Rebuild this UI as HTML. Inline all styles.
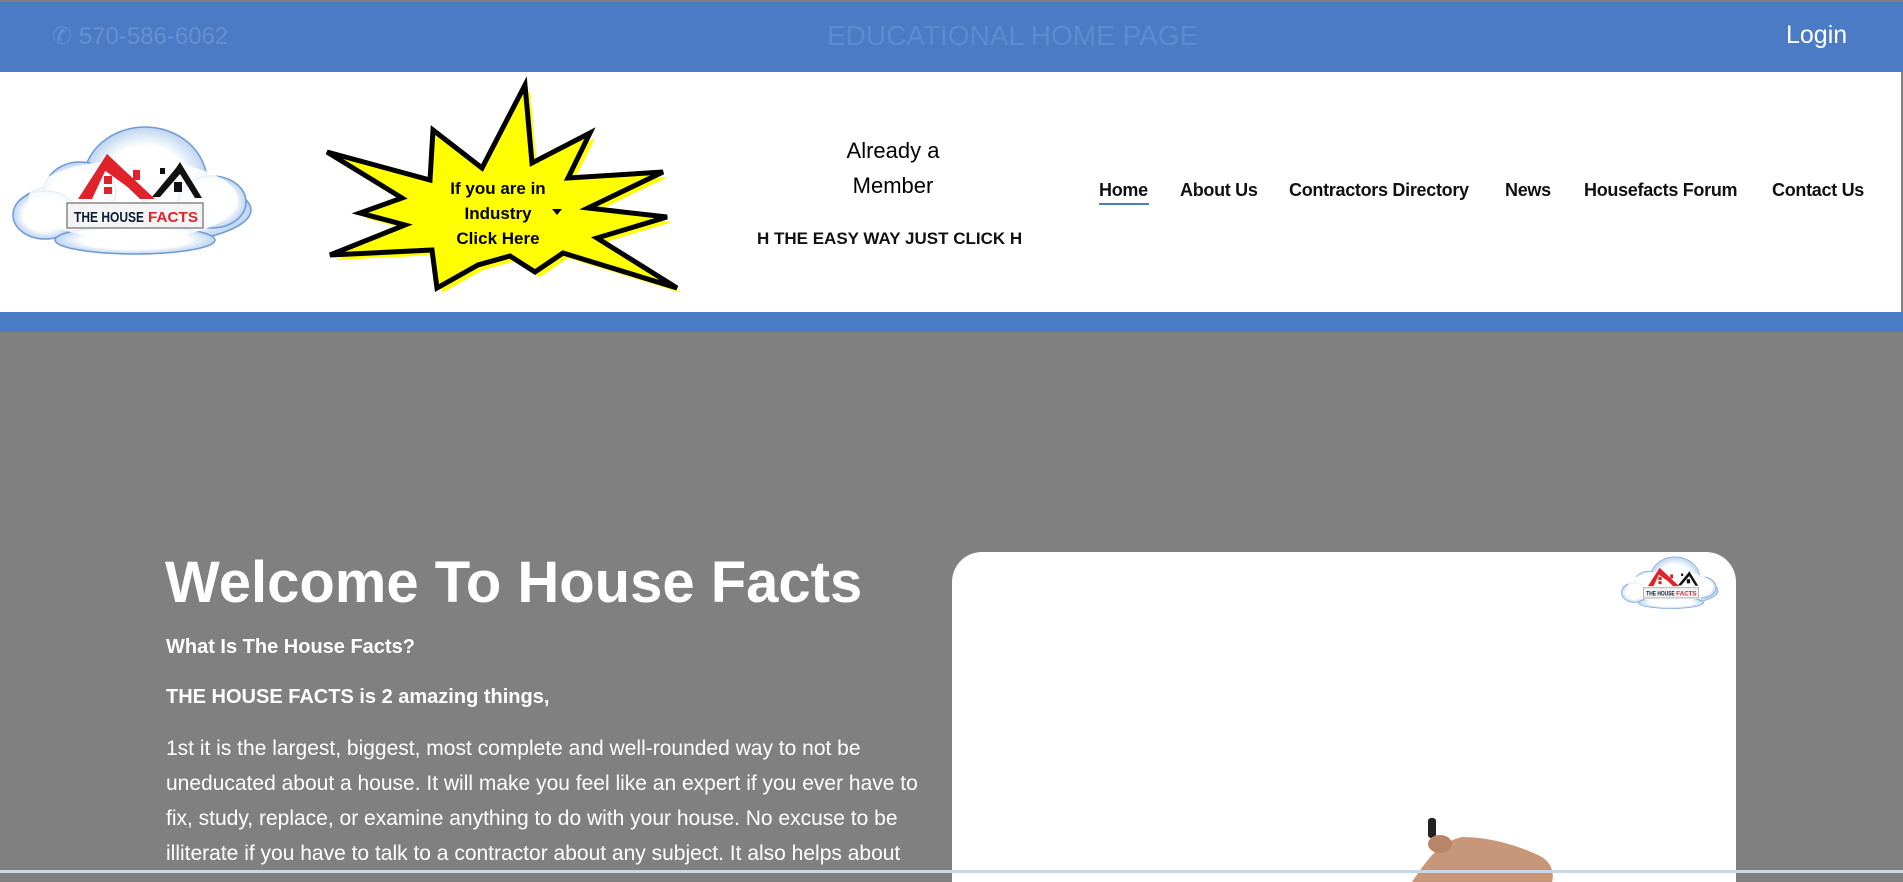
<!DOCTYPE html>
<html><head><meta charset="utf-8"><style>
*{margin:0;padding:0;box-sizing:border-box}
body{width:1903px;height:873px;overflow:hidden;background:#808080;font-family:"Liberation Sans",Arial,sans-serif;position:relative}
.top{position:absolute;left:0;top:2px;width:1903px;height:70px;background:#4b7bc4}
.abs{position:absolute;white-space:nowrap}
.hdr{position:absolute;left:0;top:72px;width:1901px;height:240px;background:#fff}
.strip{position:absolute;left:0;top:312px;width:1903px;height:20px;background:#4b7bc4}
.nav{position:absolute;top:180px;font-size:18px;font-weight:bold;color:#111;letter-spacing:-0.3px}
.w{color:#fff;font-weight:bold}
.p{position:absolute;left:166px;color:#fff;font-size:21px;line-height:35px;white-space:nowrap}
</style></head><body>
<svg width="0" height="0" style="position:absolute"><defs>
<radialGradient id="cg" cx="50%" cy="50%" r="60%"><stop offset="0.55" stop-color="#fff"/><stop offset="0.85" stop-color="#b9d2ef"/><stop offset="1" stop-color="#5c8fd0"/></radialGradient>
<g id="logo">
<g fill="url(#cg)" stroke="#6f9ad6" stroke-width="1.5">
<ellipse cx="133" cy="100" rx="118" ry="35"/>
<ellipse cx="145" cy="72" rx="62" ry="55"/>
<ellipse cx="80" cy="82" rx="36" ry="30"/>
<ellipse cx="212" cy="92" rx="34" ry="26"/>
<ellipse cx="45" cy="105" rx="32" ry="24"/>
<ellipse cx="135" cy="130" rx="80" ry="14"/>
</g>
<ellipse cx="133" cy="90" rx="105" ry="40" fill="#fff" opacity="0.85"/>
<polygon points="78,89 107,44 155,89 140,89 107,57 92,89" fill="#e0222a"/>
<polygon points="100,57 107,44 150,86 140,86" fill="#e0222a"/>
<rect x="133" y="60" width="7" height="10" fill="#e0222a"/>
<rect x="104" y="66" width="8" height="8" fill="#e0222a"/>
<rect x="104" y="77" width="8" height="7" fill="#e0222a"/>
<polygon points="152,87 176,58 180,52 202,88 195,88 180,64 160,87" fill="#111"/>
<rect x="160" y="58" width="5" height="6" fill="#111"/>
<rect x="174" y="72" width="8" height="10" fill="#111"/>
<rect x="67" y="93" width="136" height="25" fill="#f4f4f4" stroke="#888" stroke-width="1.5"/>
<text x="74" y="112" font-family="Liberation Sans,Arial,sans-serif" font-weight="bold" font-size="15" fill="#0d1b33" textLength="70" lengthAdjust="spacingAndGlyphs">THE HOUSE</text>
<text x="148" y="112" font-family="Liberation Sans,Arial,sans-serif" font-weight="bold" font-size="15" fill="#e0222a" textLength="50" lengthAdjust="spacingAndGlyphs">FACTS</text>
</g></defs></svg>

<div class="top"></div>
<div class="abs" style="left:52px;top:22px;font-size:24px;color:#6590d3">&#9990; 570-586-6062</div>
<div class="abs" style="left:827px;top:20px;font-size:28px;color:#5d8bd0">EDUCATIONAL HOME PAGE</div>
<div class="abs" style="left:1786px;top:21px;font-size:25px;color:#fff">Login</div>

<div class="hdr"></div>
<svg class="abs" style="left:0;top:110px" width="270" height="160" viewBox="0 0 270 160"><use href="#logo"/></svg>

<svg class="abs" style="left:0;top:0" width="720" height="320">
<polygon transform="translate(5,5)" fill="#ffff00" points="525,85 532,163 590,133 568,178 663,172 588,208 667,217 597,238 677,288 563,253 535,272 510,256 478,265 437,288 432,250 330,255 405,225 360,213 402,198 327,152 430,180 433,130 482,168"/>
<polygon fill="#ffff00" stroke="#000" stroke-width="5" stroke-linejoin="miter" points="525,85 532,163 590,133 568,178 663,172 588,208 667,217 597,238 677,288 563,253 535,272 510,256 478,265 437,288 432,250 330,255 405,225 360,213 402,198 327,152 430,180 433,130 482,168"/>
<polygon points="552,209 562,209 557,215" fill="#000"/>
</svg>
<div class="abs" style="left:448px;top:176px;width:100px;text-align:center;font-size:17px;font-weight:bold;line-height:25px;color:#000">If you are in<br>Industry<br>Click Here</div>

<div class="abs" style="left:833px;top:133px;width:120px;text-align:center;font-size:22px;line-height:35px;color:#000">Already a<br>Member</div>
<div class="abs" style="left:757px;top:229px;width:271px;overflow:hidden;font-size:17px;font-weight:bold;color:#111">H THE EASY WAY JUST CLICK H</div>

<div class="nav" style="left:1099px">Home</div>
<div class="abs" style="left:1099px;top:203px;width:50px;height:2px;background:#4b7bc4"></div>
<div class="nav" style="left:1180px">About Us</div>
<div class="nav" style="left:1289px">Contractors Directory</div>
<div class="nav" style="left:1505px">News</div>
<div class="nav" style="left:1584px">Housefacts Forum</div>
<div class="nav" style="left:1772px">Contact Us</div>

<div class="strip"></div>

<div class="abs w" style="left:165px;top:548px;font-size:58px;line-height:70px">Welcome To House Facts</div>
<div class="p w" style="top:630px;font-size:20px">What Is The House Facts?</div>
<div class="p w" style="top:680px;font-size:20px">THE HOUSE FACTS is 2 amazing things,</div>
<div class="p" style="top:731px">1st it is the largest, biggest, most complete and well-rounded way to not be<br>uneducated about a house. It will make you feel like an expert if you ever have to<br>fix, study, replace, or examine anything to do with your house. No excuse to be<br>illiterate if you have to talk to a contractor about any subject. It also helps about</div>

<div class="abs" style="left:952px;top:552px;width:784px;height:330px;background:#fff;border-radius:30px 30px 0 0;overflow:hidden">
<svg class="abs" style="left:664px;top:-2px" width="110" height="65" viewBox="0 0 270 160"><use href="#logo"/></svg>
<svg class="abs" style="left:460px;top:260px" width="150" height="70">
<rect x="16" y="6" width="8" height="20" rx="3" fill="#222"/>
<path d="M0,70 C20,40 30,30 50,25 C80,25 110,35 130,45 C145,55 140,70 140,70 Z" fill="#c8977a"/>
<ellipse cx="28" cy="32" rx="12" ry="9" fill="#b88568"/>
</svg>
</div>
<div class="abs" style="left:0;top:870px;width:1903px;height:3px;background:#c8d6e5"></div>
</body></html>
